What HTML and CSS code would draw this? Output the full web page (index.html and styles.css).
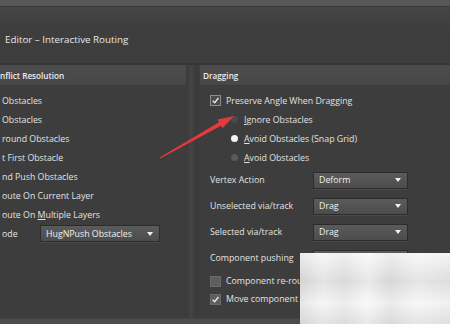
FILE: index.html
```html
<!DOCTYPE html>
<html>
<head>
<meta charset="utf-8">
<link rel="stylesheet" href="styles.css">
</head>
<body>
<div class="top"></div>
<div class="title">Editor – Interactive Routing</div>
<div class="panels">
  <section class="panel left">
    <div class="phead">nflict Resolution</div>
    <div class="pbody">
      <div class="row">Obstacles</div>
      <div class="row">Obstacles</div>
      <div class="row">round Obstacles</div>
      <div class="row">t First Obstacle</div>
      <div class="row">nd Push Obstacles</div>
      <div class="row">oute On Current Layer</div>
      <div class="row"><span>oute On <u>M</u>ultiple Layers</span></div>
      <div class="row mode"><span class="mlabel">ode</span><div class="dd wide"><span>HugNPush Obstacles</span><i class="caret"></i></div></div>
    </div>
  </section>
  <div class="divider"></div>
  <section class="panel right">
    <div class="phead">Dragging</div>
    <div class="pbody">
      <div class="row"><span class="cb checked"><svg viewBox="0 0 8 8"><path d="M1.5 4.2 L3.3 6 L6.6 1.8" /></svg></span><span>Preserve Angle When Dragging</span></div>
      <div class="row indent"><span class="rb dim"></span><span><u>I</u>gnore Obstacles</span></div>
      <div class="row indent"><span class="rb on"></span><span><u>A</u>void Obstacles (Snap Grid)</span></div>
      <div class="row indent"><span class="rb"></span><span><u>A</u>void Obstacles</span></div>
      <div class="frow"><span class="flabel">Vertex Action</span><div class="dd"><span>Deform</span><i class="caret"></i></div></div>
      <div class="frow"><span class="flabel">Unselected via/track</span><div class="dd"><span>Drag</span><i class="caret"></i></div></div>
      <div class="frow"><span class="flabel">Selected via/track</span><div class="dd"><span>Drag</span><i class="caret"></i></div></div>
      <div class="frow"><span class="flabel">Component pushing</span><div class="dd"><span>Ignore</span><i class="caret"></i></div></div>
      <div class="crow first"><span class="cb"></span><span>Component re-route</span></div>
      <div class="crow"><span class="cb checked"><svg viewBox="0 0 8 8"><path d="M1.5 4.2 L3.3 6 L6.6 1.8" /></svg></span><span>Move component track segments</span></div>
    </div>
  </section>
</div>
<div class="bottom"></div>
<svg class="arrow" width="450" height="324" viewBox="0 0 450 324">
  <polygon points="160.3,158.6 221,125.7 222.5,128.3 234,116 217.6,119.6 219,122.3 159.7,157.4" fill="#e5383f"/>
</svg>
<div class="watermark"></div>
</body>
</html>
```
FILE: styles.css
```css
* { box-sizing: border-box; }
html, body { margin: 0; padding: 0; }
body {
  width: 450px;
  height: 324px;
  overflow: hidden;
  background: #3d3d3d;
  color: #e2e2e2;
  font-family: "Open Sans", "Noto Sans", sans-serif;
  font-size: 8.8px;
  position: relative;
}
u { text-decoration: underline; text-underline-offset: 1px; }
.top {
  height: 7px;
  background: #575757;
  border-bottom: 1px solid #3a3a3a;
}
.title {
  height: 56px;
  padding: 26px 0 0 5px;
  line-height: 14px;
  font-size: 9.8px;
  color: #e8e8e8;
  background: linear-gradient(#454545, #3e3e3e 40%, #3d3d3d);
}
.panels {
  display: flex;
  height: 255px;
  border-top: 2px solid #363636;
}
.panel { display: flex; flex-direction: column; }
.left { width: 186px; }
.divider {
  width: 14px;
  background: linear-gradient(90deg, #3a3a3a, #444 40%, #3a3a3a 70%, #3d3d3d);
}
.right { flex: 1; }
.phead {
  height: 21px;
  line-height: 21px;
  background: linear-gradient(#4c4c4c, #474747);
  font-weight: 600;
  font-size: 8.2px;
  color: #ececec;
  border-bottom: 1px solid #3a3a3a;
}
.left .phead { padding-left: 0; }
.right .phead { padding-left: 3px; }
.pbody { padding-top: 5px; }
.left .pbody { padding-left: 2px; }
.right .pbody { padding-left: 10px; }
.row {
  height: 19px;
  display: flex;
  align-items: center;
  gap: 5px;
  white-space: nowrap;
}
.row.mode { gap: 0; }
.mlabel { width: 38px; }
.row.indent { padding-left: 21px; gap: 6px; }
.cb {
  width: 11px;
  height: 11px;
  border: 1px solid #8c8c8c;
  background: #4a4a4a;
  display: inline-flex;
  align-items: center;
  justify-content: center;
  flex: none;
}
.cb svg { width: 9px; height: 9px; }
.cb path { fill: none; stroke: #e6e6e6; stroke-width: 1.3; }
.crow .cb { background: #5e5e5e; border-color: #6a6a6a; }
.rb {
  width: 7px;
  height: 7px;
  border-radius: 50%;
  background: #5a5a5a;
  flex: none;
}
.rb.on { background: #f4f4f4; }
.rb.dim { background: #4a4a4a; }
.frow {
  height: 26px;
  display: flex;
  align-items: center;
  white-space: nowrap;
}
.flabel { width: 103px; }
.dd {
  width: 95px;
  height: 17px;
  border: 1px solid #2c2c2c;
  background: linear-gradient(#5b5b5b, #4c4c4c);
  display: flex;
  align-items: center;
  justify-content: space-between;
  padding: 0 6px 0 5px;
  color: #f0f0f0;
  box-shadow: 0 1px 0 #4a4a4a;
}
.dd.wide { width: 120px; }
.caret {
  width: 0;
  height: 0;
  border-left: 3.5px solid transparent;
  border-right: 3.5px solid transparent;
  border-top: 4px solid #f2f2f2;
}
.crow {
  height: 18px;
  display: flex;
  align-items: center;
  gap: 5px;
  white-space: nowrap;
}
.crow.first { margin-top: 1px; }
.bottom {
  height: 6px;
  background: #4b4b4b;
  border-top: 1px solid #444;
}
.arrow { position: absolute; left: 0; top: 0; }
.watermark {
  position: absolute;
  left: 300px;
  top: 253px;
  width: 150px;
  height: 71px;
  background:
    linear-gradient(180deg, rgba(255,255,255,0.5), rgba(200,200,200,0.3) 40%, rgba(255,255,255,0.4) 70%, rgba(210,210,210,0.4)),
    linear-gradient(90deg, #d8d8d8, #efefef 15%, #e2e2e2 30%, #f6f6f6 45%, #dedede 60%, #f2f2f2 78%, #e6e6e6);
}
```
